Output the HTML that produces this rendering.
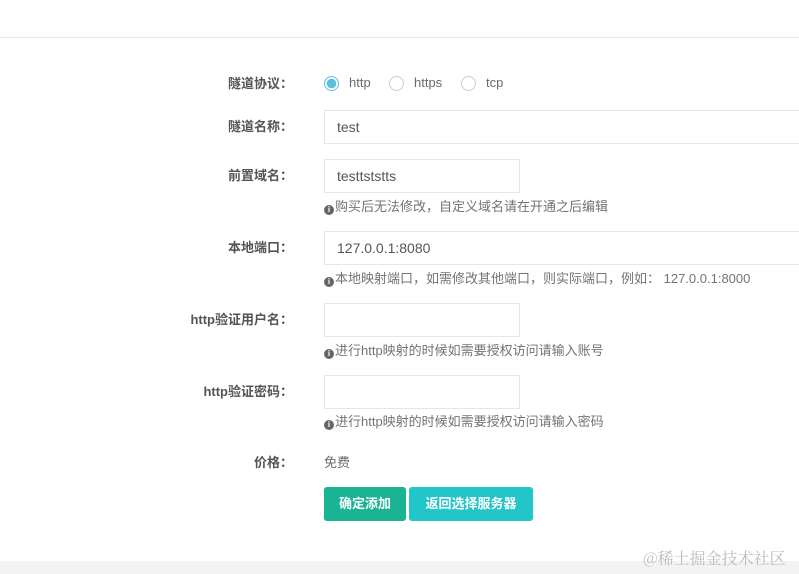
<!DOCTYPE html><html><head><meta charset="utf-8"><style>
body{margin:0;width:799px;height:574px;background:#fff;position:relative;overflow:hidden;font-family:"Liberation Sans","Noto Sans CJK SC",sans-serif;font-size:13px;color:#676a6c}
.a{position:absolute}
.l{position:absolute;right:506px;font-weight:bold;color:#555;font-size:13px;white-space:nowrap}
.in{position:absolute;left:324px;border:1px solid #e5e6e7;box-sizing:border-box;height:34px;padding:0 12px;line-height:32px;font-size:14px;color:#555}
.h{position:absolute;left:324px;font-size:13px;color:#737373;white-space:nowrap}
.h b{display:inline-block;width:10px;height:10px;border-radius:50%;background:#666;color:#fff;font-size:8px;line-height:10px;text-align:center;margin-right:1px;vertical-align:-1px}
.r{position:absolute;width:15px;height:15px;border:1px solid #ccc;border-radius:50%;box-sizing:border-box;top:76px}
.btn{position:absolute;top:487px;height:34px;line-height:34px;color:#fff;font-weight:bold;text-align:center;border-radius:3px;font-size:13px}
</style></head><body>
<div class="a" style="left:0;top:37px;width:799px;height:1px;background:#e7eaec"></div>
<div class="l" style="top:73px">隧道协议：</div>
<div class="r" style="left:324px;border-color:#5bc0de;background:radial-gradient(circle,#5bc0de 4.5px,#fff 5px)"></div><div class="a" style="left:349px;top:75px">http</div>
<div class="r" style="left:389px"></div><div class="a" style="left:414px;top:75px">https</div>
<div class="r" style="left:461px"></div><div class="a" style="left:486px;top:75px">tcp</div>
<div class="l" style="top:116px">隧道名称：</div>
<div class="in" style="top:110px;width:480px">test</div>
<div class="l" style="top:165px">前置域名：</div>
<div class="in" style="top:159px;width:196px">testtststts</div>
<div class="h" style="top:196px"><b>i</b>购买后无法修改，自定义域名请在开通之后编辑</div>
<div class="l" style="top:237px">本地端口：</div>
<div class="in" style="top:231px;width:480px">127.0.0.1:8080</div>
<div class="h" style="top:268px"><b>i</b>本地映射端口，如需修改其他端口，则实际端口，例如： 127.0.0.1:8000</div>
<div class="l" style="top:309px">http验证用户名：</div>
<div class="in" style="top:303px;width:196px"></div>
<div class="h" style="top:340px"><b>i</b>进行http映射的时候如需要授权访问请输入账号</div>
<div class="l" style="top:381px">http验证密码：</div>
<div class="in" style="top:375px;width:196px"></div>
<div class="h" style="top:411px"><b>i</b>进行http映射的时候如需要授权访问请输入密码</div>
<div class="l" style="top:452px">价格：</div>
<div class="a" style="left:324px;top:452px">免费</div>
<div class="btn" style="left:324px;width:82px;background:#1ab394">确定添加</div>
<div class="btn" style="left:409px;width:124px;background:#23c6c8">返回选择服务器</div>
<div class="a" style="left:0;top:561px;width:799px;height:13px;background:#f3f3f4"></div>
<div class="a" style="left:643px;top:546px;font-size:16px;color:#bbb;font-family:'Noto Serif CJK SC',serif">@稀土掘金技术社区</div>
</body></html>
